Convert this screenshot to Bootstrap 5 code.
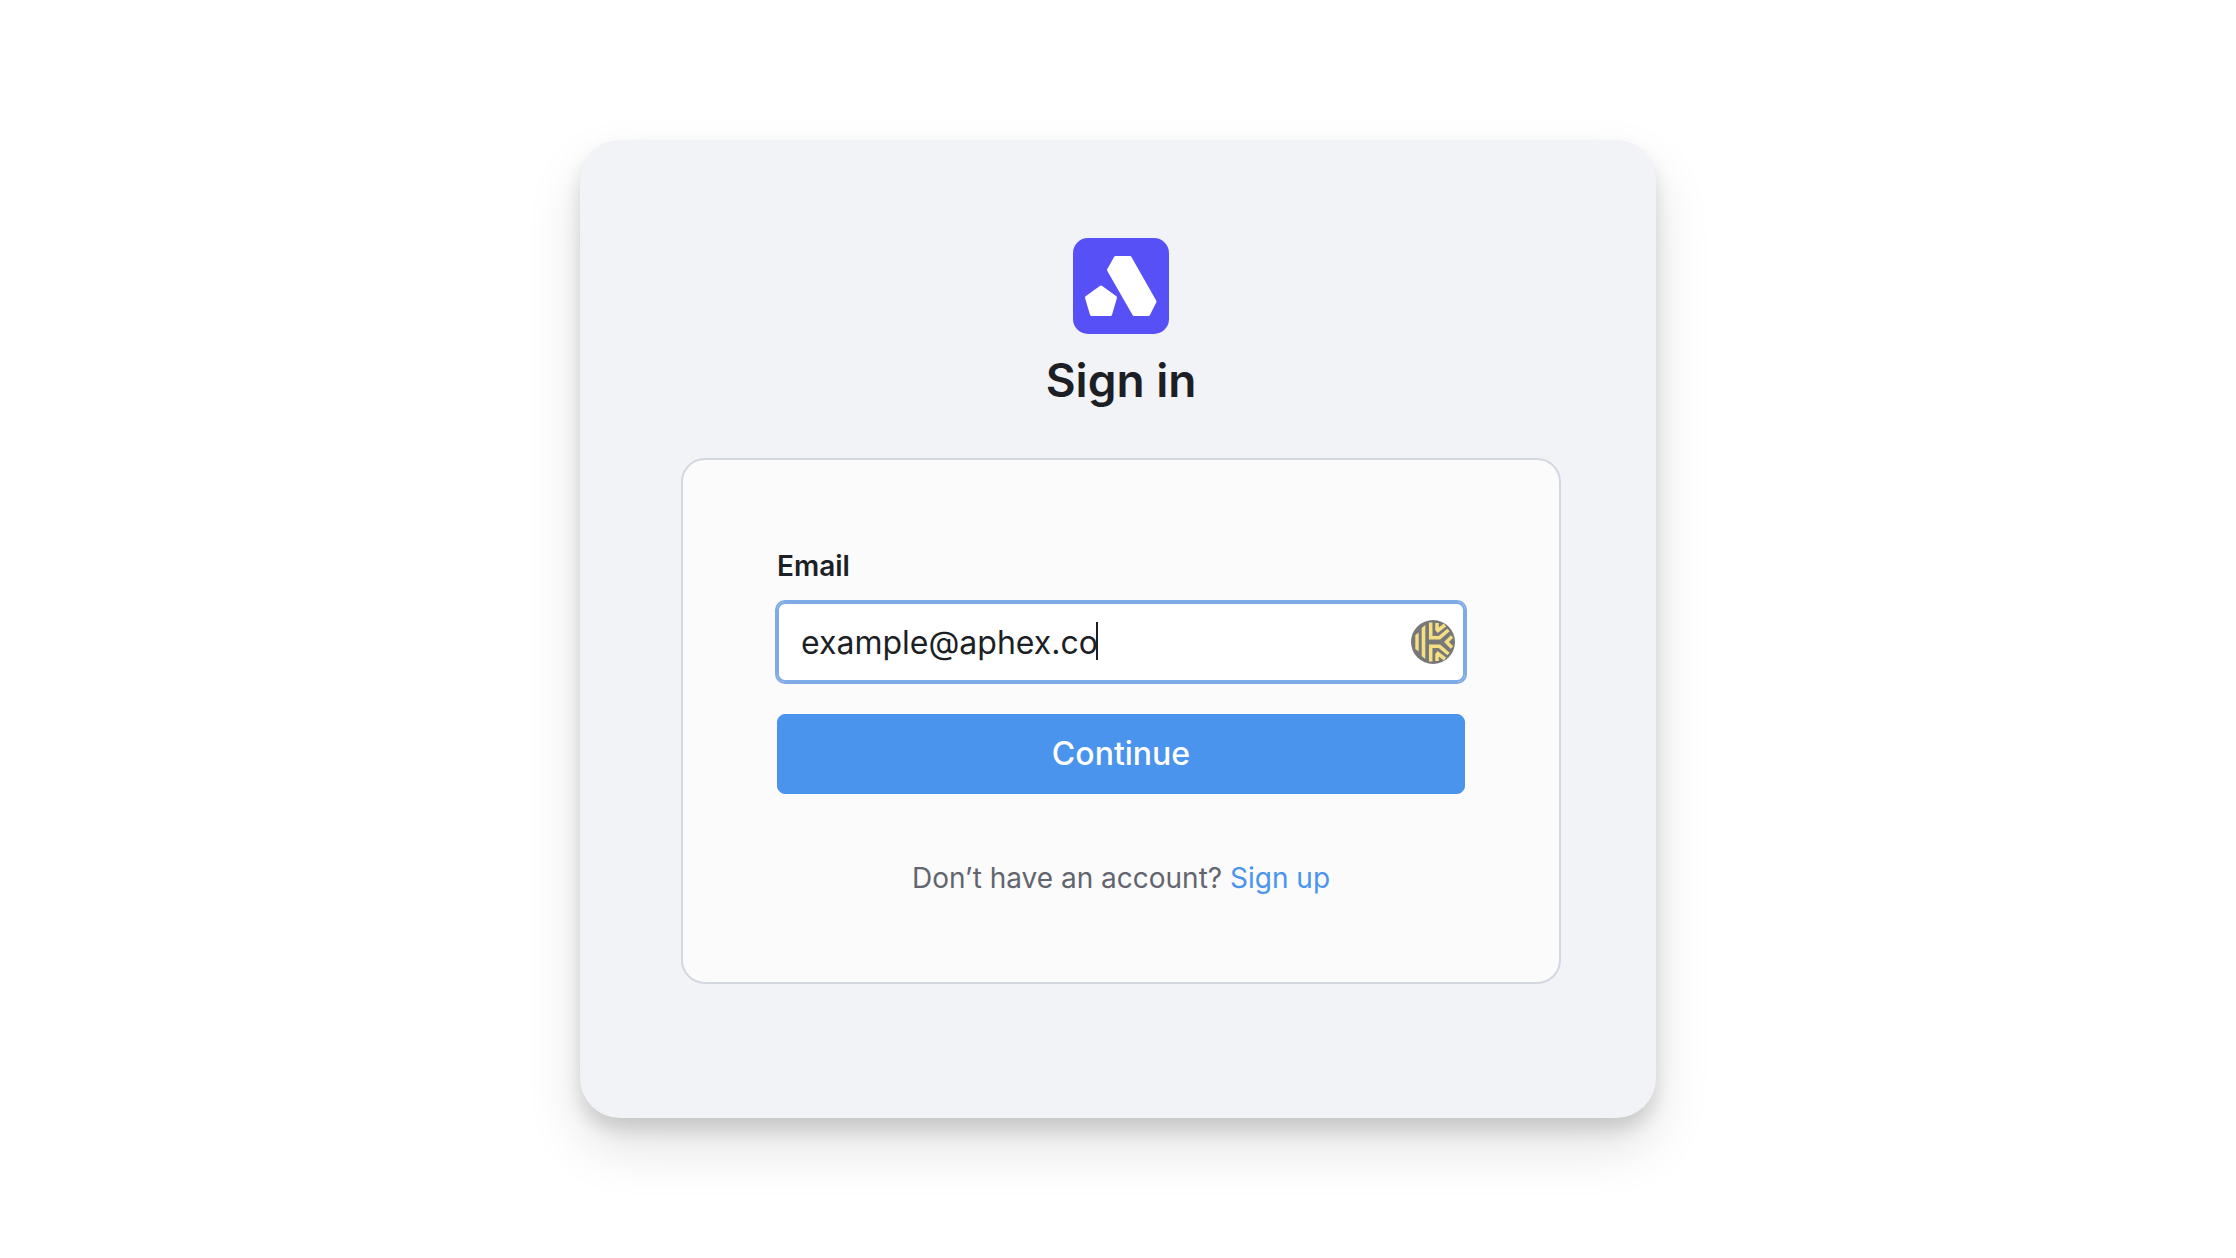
<!DOCTYPE html>
<html lang="en">
<head>
<meta charset="utf-8">
<meta name="viewport" content="width=device-width, initial-scale=1">
<title>Sign in</title>
<link href="https://cdn.jsdelivr.net/npm/bootstrap@5.3.0/dist/css/bootstrap.min.css" rel="stylesheet">
<style>
body { font-family: Inter, "Liberation Sans", sans-serif; background: #fff; color: #1d1f26; }
.auth-shell {
  max-width: 1076px; padding: 98px 95px 134px 101px; border-radius: 40px; background: #f1f3f7;
  box-shadow: 0 12px 18px rgba(0,0,0,.13), 0 28px 56px rgba(0,0,0,.12);
}
.auth-logo { width: 96px; height: 96px; }
.auth-title { font-size: 46px; line-height: 60px; font-weight: 600; margin: 16px 0 48px; }
.auth-panel { background: #fbfbfb; border: 2px solid #d5d7e0; border-radius: 24px; padding: 86px 94px 84px; }
.auth-label { font-size: 28px; line-height: 40px; font-weight: 600; margin-bottom: 16px; }
.auth-input {
  height: 80px; font-size: 32px; line-height: 40px; padding: 0 64px 0 22px; color: #1d1f26;
  border: 2px solid #7eaae5; border-radius: 8px;
}
.auth-input:focus { border-color: #7eaae5; box-shadow: none; color: #1d1f26; }
.auth-field { border-radius: 8px; box-shadow: 0 0 0 2px #7eaae5; margin-bottom: 32px; }
.auth-caret { left: 22px; top: 20px; font-size: 32px; line-height: 38px; height: 38px; pointer-events: none; border-right: 2px solid #1d1f26; color: transparent; }
.auth-keeper { right: 10px; top: 18px; width: 44px; height: 44px; }
.auth-submit {
  height: 80px; font-size: 32px; font-weight: 500; border-radius: 8px; padding: 0;
  --bs-btn-bg: #4a94ed; --bs-btn-border-color: #4a94ed; --bs-btn-hover-bg: #3c86e0; --bs-btn-hover-border-color: #3c86e0;
}
.auth-foot { font-size: 28px; line-height: 40px; margin: 64px 0 0; color: #62656e; }
.auth-foot a { color: #4a94ed; }
</style>
<script src="https://cdn.jsdelivr.net/npm/bootstrap@5.3.0/dist/js/bootstrap.bundle.min.js"></script>
</head>
<body>
<main class="min-vh-100 d-flex align-items-center justify-content-center">
  <section class="auth-shell w-100">
    <div class="text-center">
      <svg class="auth-logo d-block mx-auto" viewBox="0 0 96 96" role="img" aria-label="Logo">
        <rect width="96" height="96" rx="15" fill="#5850f7"/>
        <g fill="#fff" stroke="#fff" stroke-width="3" stroke-linejoin="round">
          <path d="M42.5 19.5H57L82 63.500L75.500 76.500H61L35.500 32Z"/>
          <path d="M28 49L42.500 59.500L37.500 76.500H18.500L13.500 59.500Z"/>
        </g>
      </svg>
      <h1 class="auth-title">Sign in</h1>
    </div>
    <form class="auth-panel">
      <label class="auth-label d-block" for="email">Email</label>
      <div class="auth-field position-relative">
        <input class="auth-input form-control" type="email" id="email" value="example@aphex.co">
        <span class="auth-caret position-absolute" aria-hidden="true">example@aphex.co</span>
        <svg class="auth-keeper position-absolute" viewBox="0 0 44 44" aria-hidden="true">
          <circle cx="22" cy="22" r="22" fill="#777877"/>
          <g fill="#f5df84">
            <path d="M4.300 15L7.700 12.500V31.500L4.300 29Z"/>
            <path d="M10.700 8L14.300 5V39L10.700 36Z"/>
          </g>
          <g fill="none" stroke="#f5df84" stroke-width="3.500">
            <path d="M19.700 2.500V17.700H28.500L37.500 10"/>
            <path d="M19.700 41.500V26.300H28.500L37.500 34"/>
            <path d="M26 3V10.500M25.500 11.500L34 5"/>
            <path d="M26 41V33.500M25.500 32.500L34 39"/>
            <path d="M41 16.500L35.500 22L41 27.500"/>
          </g>
        </svg>
      </div>
      <button class="auth-submit btn btn-primary w-100" type="submit">Continue</button>
      <p class="auth-foot text-center">Don’t have an account? <a href="#" class="text-decoration-none">Sign up</a></p>
    </form>
  </section>
</main>
</body>
</html>
